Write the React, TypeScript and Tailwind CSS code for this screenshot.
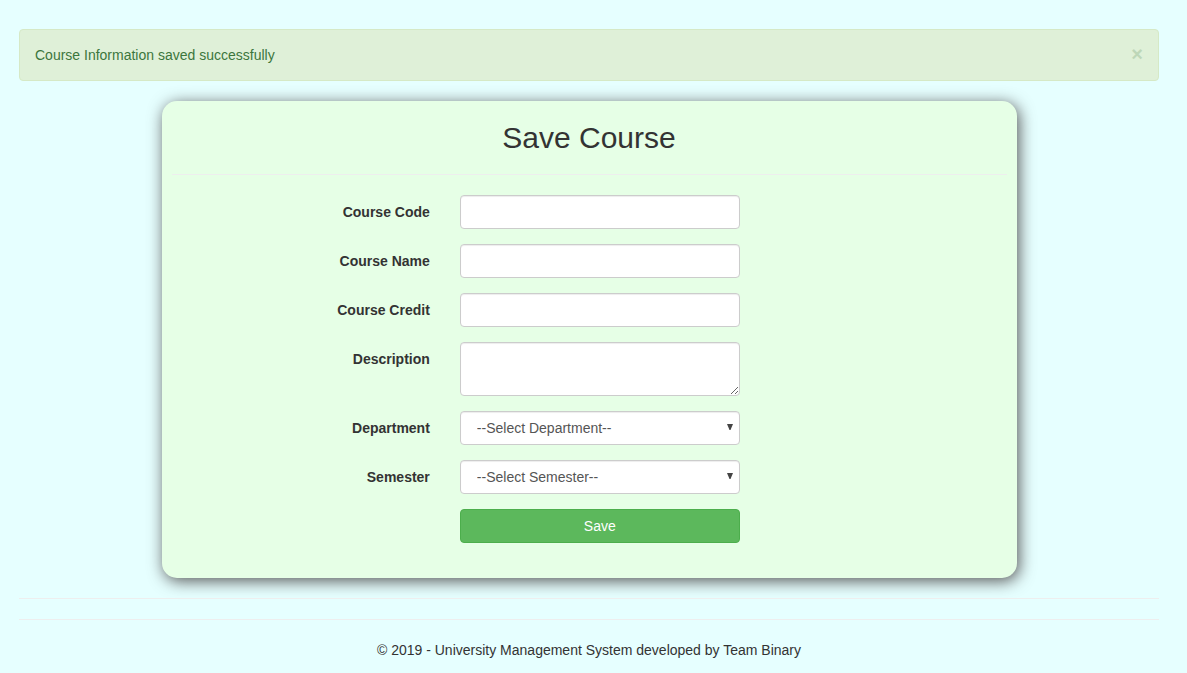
import type { ReactNode } from "react";

const control =
  "block w-full max-w-[280px] rounded border border-[#ccc] bg-white text-sm leading-5 text-[#555] shadow-[inset_0_1px_1px_rgba(0,0,0,0.075)] outline-none focus:border-[#66afe9]";

function Field({ id, label, children }: { id: string; label: string; children: ReactNode }) {
  return (
    <div className="mb-[15px] grid grid-cols-3">
      <label htmlFor={id} className="px-[15px] pt-[7px] text-right font-bold">
        {label}
      </label>
      <div className="col-span-2 px-[15px]">{children}</div>
    </div>
  );
}

function TextField({ id, label }: { id: string; label: string }) {
  return (
    <Field id={id} label={label}>
      <input id={id} name={id} type="text" className={`${control} h-[34px] px-3 py-1.5`} />
    </Field>
  );
}

function SelectField({ id, label, placeholder }: { id: string; label: string; placeholder: string }) {
  return (
    <Field id={id} label={label}>
      <div className="relative max-w-[280px]">
        <select id={id} name={id} className={`${control} h-[34px] appearance-none pr-6 pl-4`}>
          <option value="">{placeholder}</option>
        </select>
        <svg
          viewBox="0 0 6 6"
          aria-hidden="true"
          className="pointer-events-none absolute top-[13px] right-[7px] h-1.5 w-1.5 fill-[#444]"
        >
          <path d="M0 0h6L3.5 6h-1z" />
        </svg>
      </div>
    </Field>
  );
}

export default function App() {
  return (
    <div className="min-h-screen bg-[#e6ffff] pt-[29px] pr-[9px] font-['Liberation_Sans',Arial,sans-serif] text-sm leading-5 text-[#333]">
      <div className="mx-auto max-w-[1140px]">
        <div
          role="alert"
          className="mb-5 flex items-start justify-between rounded border border-[#d6e9c6] bg-[#dff0d8] p-[15px] text-[#3c763d]"
        >
          <span>Course Information saved successfully</span>
          <button
            type="button"
            aria-label="Close"
            className="h-[18px] cursor-pointer text-xl leading-[18px] font-bold text-[#3c763d] opacity-20"
          >
            ×
          </button>
        </div>

        <main className="mx-auto w-3/4 rounded-[15px] bg-[#e6ffe6] px-2.5 pt-5 pb-5 shadow-[2px_3px_16px_#555]">
          <h2 className="text-center text-[30px] leading-[33px]">Save Course</h2>
          <hr className="my-5 border-[#eee]" />
          <form className="-mx-[15px]" onSubmit={(e) => e.preventDefault()}>
            <TextField id="courseCode" label="Course Code" />
            <TextField id="courseName" label="Course Name" />
            <TextField id="courseCredit" label="Course Credit" />
            <Field id="description" label="Description">
              <textarea id="description" name="description" rows={2} className={`${control} px-3 py-1.5`} />
            </Field>
            <SelectField id="department" label="Department" placeholder="--Select Department--" />
            <SelectField id="semester" label="Semester" placeholder="--Select Semester--" />
            <div className="mb-[15px] grid grid-cols-3">
              <div className="col-span-2 col-start-2 px-[15px]">
                <button
                  type="submit"
                  className="block w-full max-w-[280px] cursor-pointer rounded border border-[#4cae4c] bg-[#5cb85c] px-3 py-1.5 text-center text-white"
                >
                  Save
                </button>
              </div>
            </div>
          </form>
        </main>

        <hr className="my-5 border-[#eee]" />
        <hr className="my-5 border-[#eee]" />
        <footer className="text-center">
          <p>© 2019 - University Management System developed by Team Binary</p>
        </footer>
      </div>
    </div>
  );
}
